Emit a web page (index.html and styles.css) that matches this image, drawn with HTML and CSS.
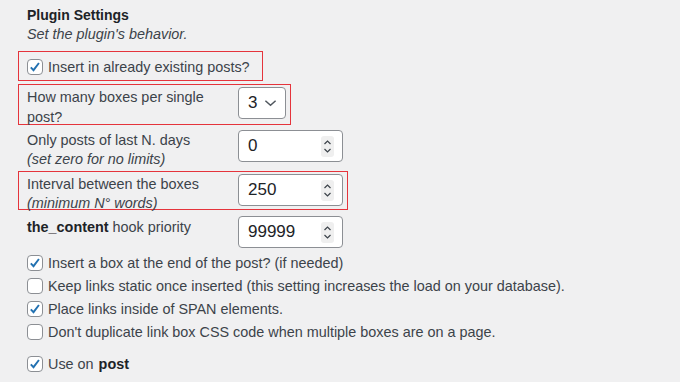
FILE: index.html
```html
<!DOCTYPE html>
<html lang="en">
<head>
    <meta charset="UTF-8">
    <title>Plugin Settings</title>
    <link rel="stylesheet" href="styles.css">
</head>
<body>

    <div class="settings">
        <h2 class="title">Plugin Settings</h2>
        <p class="desc">Set the plugin's behavior.</p>

        <!-- existing posts -->
        <div class="row mark r-existing">
            <label class="check">
                <span class="box on"><svg viewBox="0 0 16 16"><path d="M3.2 8.4l3.1 3.2 6.2-8.2"/></svg></span>
                Insert in already existing posts?
            </label>
        </div>

        <!-- boxes per post -->
        <div class="row mark r-boxes">
            <div class="th wide">How many boxes per single<br>post?</div>
            <div class="select">
                <span>3</span>
                <svg viewBox="0 0 14 8"><path d="M1.5 1.5l5.5 5 5.5-5"/></svg>
            </div>
        </div>

        <div class="row r-days">
            <div class="th">Only posts of last N. days<br><em>(set zero for no limits)</em></div>
            <div class="number">
                <span>0</span>
                <svg class="spin" viewBox="0 0 13 21"><rect width="13" height="21" rx="3"/><path d="M3.5 8l3-3 3 3M3.5 13l3 3 3-3"/></svg>
            </div>
        </div>

        <div class="row mark r-interval">
            <div class="th">Interval between the boxes<br><em>(minimum N° words)</em></div>
            <div class="number">
                <span>250</span>
                <svg class="spin" viewBox="0 0 13 21"><rect width="13" height="21" rx="3"/><path d="M3.5 8l3-3 3 3M3.5 13l3 3 3-3"/></svg>
            </div>
        </div>

        <div class="row r-priority">
            <div class="th low"><b>the_content</b> hook priority</div>
            <div class="number">
                <span>99999</span>
                <svg class="spin" viewBox="0 0 13 21"><rect width="13" height="21" rx="3"/><path d="M3.5 8l3-3 3 3M3.5 13l3 3 3-3"/></svg>
            </div>
        </div>

        <div class="checks">
            <label class="check">
                <span class="box on"><svg viewBox="0 0 16 16"><path d="M3.2 8.4l3.1 3.2 6.2-8.2"/></svg></span>
                Insert a box at the end of the post? (if needed)
            </label>
            <label class="check">
                <span class="box"></span>
                Keep links static once inserted (this setting increases the load on your database).
            </label>
            <label class="check">
                <span class="box on"><svg viewBox="0 0 16 16"><path d="M3.2 8.4l3.1 3.2 6.2-8.2"/></svg></span>
                Place links inside of SPAN elements.
            </label>
            <label class="check">
                <span class="box"></span>
                Don't duplicate link box CSS code when multiple boxes are on a page.
            </label>
        </div>

        <div class="checks post-types">
            <label class="check">
                <span class="box on"><svg viewBox="0 0 16 16"><path d="M3.2 8.4l3.1 3.2 6.2-8.2"/></svg></span>
                Use on <b>post</b>
            </label>
        </div>
    </div>

</body>
</html>
```

FILE: styles.css
```css
body {
    margin: 0;
    background: #f0f0f1;
    font-family: "Liberation Sans", Arial, sans-serif;
    font-size: 14.4px;
    color: #3c434a;
}

.settings {
    padding: 6px 0 0 18px;
}

.title {
    margin: 0;
    padding-left: 9px;
    font-size: 14px;
    line-height: 18px;
    color: #1d2327;
}

.desc {
    margin: 0;
    padding-left: 9px;
    line-height: 20px;
    font-style: italic;
}

.row {
    display: flex;
    align-items: flex-start;
    width: fit-content;
    border: 1px solid transparent;
    padding: 2px 4px 5px 8px;
}

.mark {
    border-color: #e5343c;
}

.r-existing {
    margin-top: 7px;
    padding: 5px 12px 3px 8px;
}

.r-boxes {
    margin-top: 3px;
}

.r-days {
    margin-top: 2px;
}

.r-interval {
    margin-top: 3px;
    padding-bottom: 3px;
}

.r-priority {
    margin-top: 3px;
    padding-bottom: 2px;
}

.th {
    box-sizing: border-box;
    width: 211px;
    height: 32px;
    padding-top: 1px;
    line-height: 19px;
}

.th.wide {
    line-height: 20px;
    padding-top: 0;
}

.th.low {
    padding-top: 2px;
}

.th b {
    color: #1d2327;
}

.select,
.number {
    display: flex;
    align-items: center;
    justify-content: space-between;
    box-sizing: border-box;
    height: 32px;
    background: #fff;
    border: 1px solid #8c8f94;
    border-radius: 4px;
    padding: 0 8px 0 9px;
    font-size: 17px;
    color: #1d2327;
}

.select {
    width: 48px;
}

.select svg {
    width: 13px;
    height: 8px;
    fill: none;
    stroke: #50575e;
    stroke-width: 1.6;
}

.number {
    width: 105px;
}

.spin {
    width: 13px;
    height: 21px;
}

.spin rect {
    fill: #efefef;
}

.spin path {
    fill: none;
    stroke: #3c434a;
    stroke-width: 1.2;
}

.checks {
    padding-left: 9px;
}

.checks .check {
    height: 23px;
}

.post-types {
    margin-top: 9px;
}

.check {
    display: flex;
    align-items: center;
    gap: 5px;
    line-height: 20px;
}

.check b {
    color: #1d2327;
}

.box {
    display: block;
    box-sizing: border-box;
    width: 16px;
    height: 16px;
    background: #fff;
    border: 1px solid #8c8f94;
    border-radius: 4px;
    flex: none;
}

.box svg {
    display: block;
    width: 14px;
    height: 14px;
    fill: none;
    stroke: #2271b1;
    stroke-width: 2.2;
}
```
